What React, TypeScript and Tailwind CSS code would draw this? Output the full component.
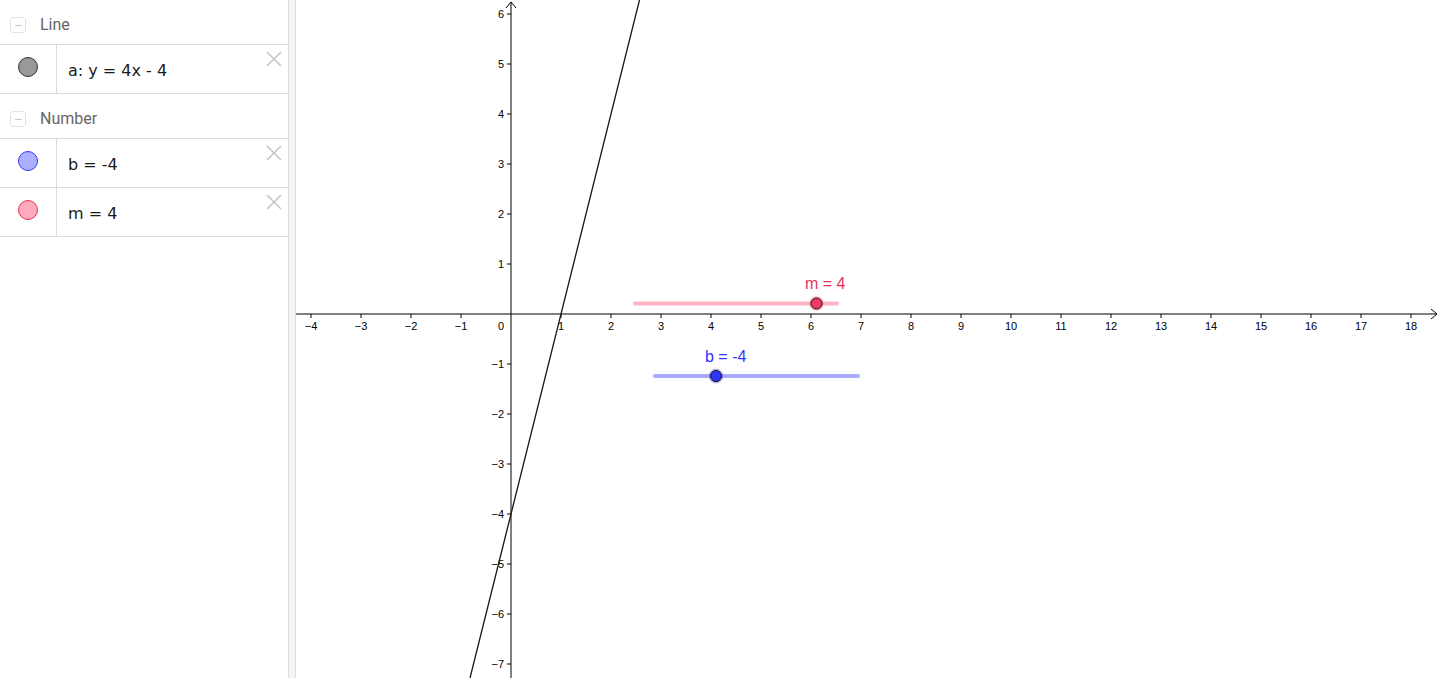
import React from "react";

const OX = 511;
const OY = 314;
const U = 50;

const xTicks = Array.from({ length: 23 }, (_, i) => i - 4).filter((n) => n !== 0);
const yTicks = Array.from({ length: 14 }, (_, i) => 6 - i).filter((n) => n !== 0);

const fmt = (n: number) => (n < 0 ? `\u2212${-n}` : `${n}`);

function CloseIcon() {
  return (
    <svg width="16" height="16" viewBox="0 0 16 16" className="text-[#c4c4c4]">
      <path d="M1 1 L15 15 M15 1 L1 15" stroke="currentColor" strokeWidth="1.5" fill="none" />
    </svg>
  );
}

function GroupHeader({ title }: { title: string }) {
  return (
    <div className="flex h-[44px] items-center pt-[6px]">
      <div className="ml-[10px] flex h-[16px] w-[16px] items-center justify-center rounded-[3px] border border-[#e3e3e3]">
        <div className="h-[1px] w-[7px] bg-[#c8c8c8]" />
      </div>
      <span className="ml-[14px] font-['Roboto',sans-serif] text-[16px] text-[#666]">{title}</span>
    </div>
  );
}

interface RowProps {
  label: string;
  fill: string;
  stroke: string;
  top?: boolean;
}

function ObjectRow({ label, fill, stroke, top }: RowProps) {
  return (
    <div className={`flex border-b border-[#dcdcdc] ${top ? "h-[50px] border-t" : "h-[49px]"}`}>
      <div className="flex w-[57px] items-start justify-center border-r border-[#dcdcdc] pt-[12px]">
        <div
          className="h-[20px] w-[20px] rounded-full border"
          style={{ background: fill, borderColor: stroke }}
        />
      </div>
      <div className="relative flex-1">
        <span className="absolute left-[11px] top-[17px] font-['DejaVu_Sans',sans-serif] text-[16px] leading-[18px] text-[#1a1a1a]">
          {label}
        </span>
        <div className="absolute right-[6px] top-[6px]">
          <CloseIcon />
        </div>
      </div>
    </div>
  );
}

function Graph() {
  const lineTop = { x: OX + ((OY / U + 4) / 4) * U, y: 0 };
  const lineBot = { x: OX + (((OY - 678) / U + 4) / 4) * U, y: 678 };
  return (
    <svg
      width="1144"
      height="678"
      viewBox="296 0 1144 678"
      className="block"
      style={{ fontFamily: '"Liberation Sans", Arial, sans-serif' }}
    >
      {/* axes */}
      <line x1="296" y1={OY} x2="1437" y2={OY} stroke="#000" strokeWidth="1" />
      <path d={`M1431 ${OY - 5} L1437 ${OY} L1431 ${OY + 5}`} stroke="#000" fill="none" strokeWidth="1" />
      <line x1={OX} y1="2" x2={OX} y2="678" stroke="#000" strokeWidth="1" />
      <path d={`M${OX - 5} 8 L${OX} 2 L${OX + 5} 8`} stroke="#000" fill="none" strokeWidth="1" />

      {xTicks.map((n) => {
        const x = OX + n * U;
        return (
          <g key={`x${n}`}>
            <line x1={x} y1={OY} x2={x} y2={OY + 4} stroke="#000" strokeWidth="1" />
            <text x={x} y={OY + 16} fontSize="11" textAnchor="middle" fill="#000">
              {fmt(n)}
            </text>
          </g>
        );
      })}
      <text x={OX - 7} y={OY + 16} fontSize="11" textAnchor="end" fill="#000">
        0
      </text>
      {yTicks.map((n) => {
        const y = OY - n * U;
        return (
          <g key={`y${n}`}>
            <line x1={OX - 4} y1={y} x2={OX} y2={y} stroke="#000" strokeWidth="1" />
            <text x={OX - 7} y={y + 4} fontSize="11" textAnchor="end" fill="#000">
              {fmt(n)}
            </text>
          </g>
        );
      })}

      {/* line a */}
      <line x1={lineTop.x} y1={lineTop.y} x2={lineBot.x} y2={lineBot.y} stroke="#1a1a1a" strokeWidth="1.3" />

      {/* slider m */}
      <line x1="635" y1="303.5" x2="837" y2="303.5" stroke="#ffb3c5" strokeWidth="4" strokeLinecap="round" />
      <circle cx="816.5" cy="303.5" r="7.5" fill="#f47c98" opacity="0.45" />
      <circle cx="816.5" cy="303.5" r="5.5" fill="#ee3a62" stroke="#111" strokeWidth="1" />
      <text x="805" y="289" fontSize="16" fill="#e8305e">
        m = 4
      </text>

      {/* slider b */}
      <line x1="655" y1="376" x2="858" y2="376" stroke="#aaaaff" strokeWidth="4" strokeLinecap="round" />
      <circle cx="716" cy="376" r="7.5" fill="#6a6ae0" opacity="0.45" />
      <circle cx="716" cy="376" r="5.5" fill="#3333ff" stroke="#111" strokeWidth="1" />
      <text x="705" y="362" fontSize="16" fill="#3333ff">
        b = -4
      </text>
    </svg>
  );
}

export default function App() {
  return (
    <div className="flex h-[678px] w-[1440px] overflow-hidden bg-white font-['Roboto',sans-serif]">
      <div className="w-[289px] shrink-0 border-r border-[#dcdcdc]">
        <GroupHeader title="Line" />
        <ObjectRow label="a: y = 4x - 4" fill="#999999" stroke="#333333" top />
        <GroupHeader title="Number" />
        <ObjectRow label="b = -4" fill="#aab0ff" stroke="#3838ff" top />
        <ObjectRow label="m = 4" fill="#ffabbd" stroke="#e8305e" />
      </div>
      <div className="w-[7px] shrink-0 border-r border-[#dcdcdc] bg-[#f4f4f4]" />
      <div className="flex-1">
        <Graph />
      </div>
    </div>
  );
}
